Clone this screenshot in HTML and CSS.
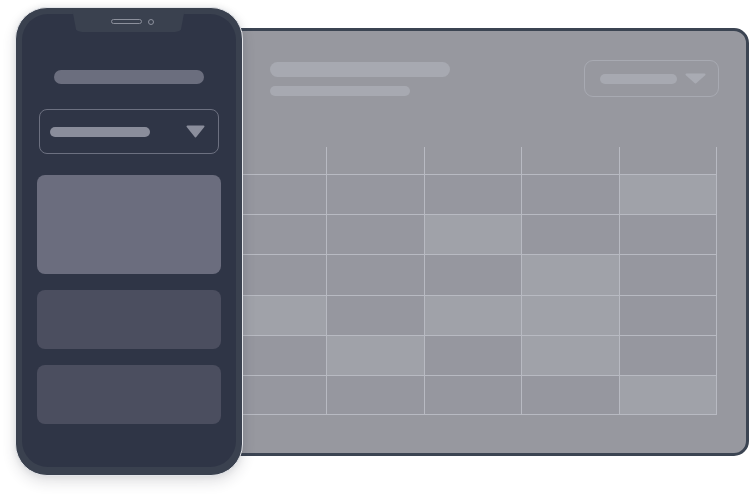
FILE: index.html
```html
<!DOCTYPE html>
<html lang="en">
<head>
<meta charset="utf-8">
<title>Calendar mockup</title>
<link rel="stylesheet" href="styles.css">
</head>
<body>
<div class="stage">
  <div class="window">
    <div class="win-header">
      <div class="win-titles">
        <div class="bar bar-title"></div>
        <div class="bar bar-sub"></div>
      </div>
      <div class="win-select">
        <div class="bar bar-select"></div>
        <svg class="caret" width="21" height="11" viewBox="0 0 21 11"><polygon points="1.5,1.5 19.5,1.5 10.5,9.5" fill="#a9abb3" stroke="#a9abb3" stroke-width="2" stroke-linejoin="round"/></svg>
      </div>
    </div>
    <div class="cal">
      <div class="hd"></div><div class="hd"></div><div class="hd"></div><div class="hd"></div><div class="hd"></div>
      <div class="c"></div><div class="c"></div><div class="c"></div><div class="c"></div><div class="c lt"></div>
      <div class="c"></div><div class="c"></div><div class="c lt"></div><div class="c"></div><div class="c"></div>
      <div class="c"></div><div class="c"></div><div class="c"></div><div class="c lt"></div><div class="c"></div>
      <div class="c lt"></div><div class="c"></div><div class="c lt"></div><div class="c lt"></div><div class="c"></div>
      <div class="c"></div><div class="c lt"></div><div class="c"></div><div class="c lt"></div><div class="c"></div>
      <div class="c last"></div><div class="c last"></div><div class="c last"></div><div class="c last"></div><div class="c last lt"></div>
    </div>
  </div>

  <div class="phone">
    <div class="screen">
      <div class="notch">
        <span class="speaker"></span>
        <span class="camera"></span>
      </div>
      <div class="p-title"></div>
      <div class="p-select">
        <div class="p-select-bar"></div>
        <svg class="caret" width="19" height="13" viewBox="0 0 19 13"><polygon points="1.5,1.5 17.5,1.5 9.5,11.5" fill="#8b8e9c" stroke="#8b8e9c" stroke-width="2" stroke-linejoin="round"/></svg>
      </div>
      <div class="p-card p-card-big"></div>
      <div class="p-card p-card-small"></div>
      <div class="p-card p-card-small"></div>
    </div>
  </div>
</div>
</body>
</html>
```

FILE: styles.css
```css
* { box-sizing: border-box; }
html, body { margin: 0; padding: 0; background: #ffffff; }
body { font-family: "Liberation Sans", Arial, sans-serif; }

.stage {
  position: relative;
  width: 750px;
  height: 500px;
  overflow: hidden;
  padding-top: 28px;
}

/* ---------- desktop window ---------- */
.window {
  margin-left: 200px;
  width: 549px;
  height: 428px;
  border: 3px solid #3b4452;
  border-radius: 15px;
  background: #97989f;
}

.win-header {
  display: flex;
  justify-content: space-between;
  align-items: flex-start;
  padding: 29px 27px 0 67px;
}

.win-titles {
  display: flex;
  flex-direction: column;
  gap: 9px;
  padding-top: 2px;
}

.bar { border-radius: 8px; background: #a7a9b1; }
.bar-title { width: 180px; height: 15px; }
.bar-sub { width: 140px; height: 10px; }

.win-select {
  width: 135px;
  height: 37px;
  border: 1.5px solid #a8aab2;
  border-radius: 9px;
  display: flex;
  align-items: center;
  justify-content: space-between;
  padding: 0 12px 0 15px;
}
.bar-select { width: 77px; height: 10px; }

.cal {
  margin: 50px 0 0 27px;
  width: 487px;
  display: grid;
  grid-template-columns: repeat(5, 1fr);
  grid-template-rows: 27px repeat(6, 40.2px);
}
.cal .hd { border-right: 1px solid #b8bac2; }
.cal .c {
  border-right: 1px solid #b8bac2;
  border-top: 1px solid #b8bac2;
  background: #96979f;
}
.cal .c.lt { background: #a0a2a9; }
.cal .c.last { border-bottom: 1px solid #b8bac2; }

/* ---------- phone ---------- */
.phone {
  position: absolute;
  left: 15px;
  top: 7px;
  width: 228px;
  height: 469px;
  border-radius: 32px;
  background: #3a414f;
  border: 1px solid #e3e5e9;
  padding: 6px 6px 8px 6px;
  box-shadow: 0 6px 14px rgba(40, 45, 60, 0.14), 0 0 6px rgba(40, 45, 60, 0.08);
}

.screen {
  position: relative;
  height: 100%;
  border-radius: 26px;
  background: #2f3546;
  padding: 56px 15px 0 15px;
  display: flex;
  flex-direction: column;
}

.notch {
  position: absolute;
  top: -6px;
  left: 50px;
  width: 113px;
  height: 24px;
  background: #3a414f;
  border-radius: 0 0 10px 10px;
  clip-path: polygon(0 0, 100% 0, 96% 100%, 4% 100%);
  display: flex;
  align-items: center;
  justify-content: center;
  gap: 6px;
  padding-top: 3px;
}
.speaker {
  width: 31px;
  height: 5px;
  border: 1px solid #8c909c;
  border-radius: 3px;
  margin-left: 8px;
}
.camera {
  width: 6px;
  height: 6px;
  border: 1px solid #8c909c;
  border-radius: 50%;
}

.p-title {
  align-self: center;
  width: 150px;
  height: 14px;
  border-radius: 7px;
  background: #6b6e7e;
}

.p-select {
  margin: 25px 2px 0 2px;
  height: 45px;
  border: 1.5px solid #6c7080;
  border-radius: 8px;
  display: flex;
  align-items: center;
  justify-content: space-between;
  padding: 0 13px 0 10px;
}
.p-select-bar {
  width: 100px;
  height: 10px;
  border-radius: 5px;
  background: #8a8d9b;
}

.p-card { border-radius: 8px; }
.p-card-big { margin-top: 21px; height: 99px; background: #6b6d7e; }
.p-card-small { margin-top: 16px; height: 59px; background: #4b4e5f; }

.caret { display: block; }
```
